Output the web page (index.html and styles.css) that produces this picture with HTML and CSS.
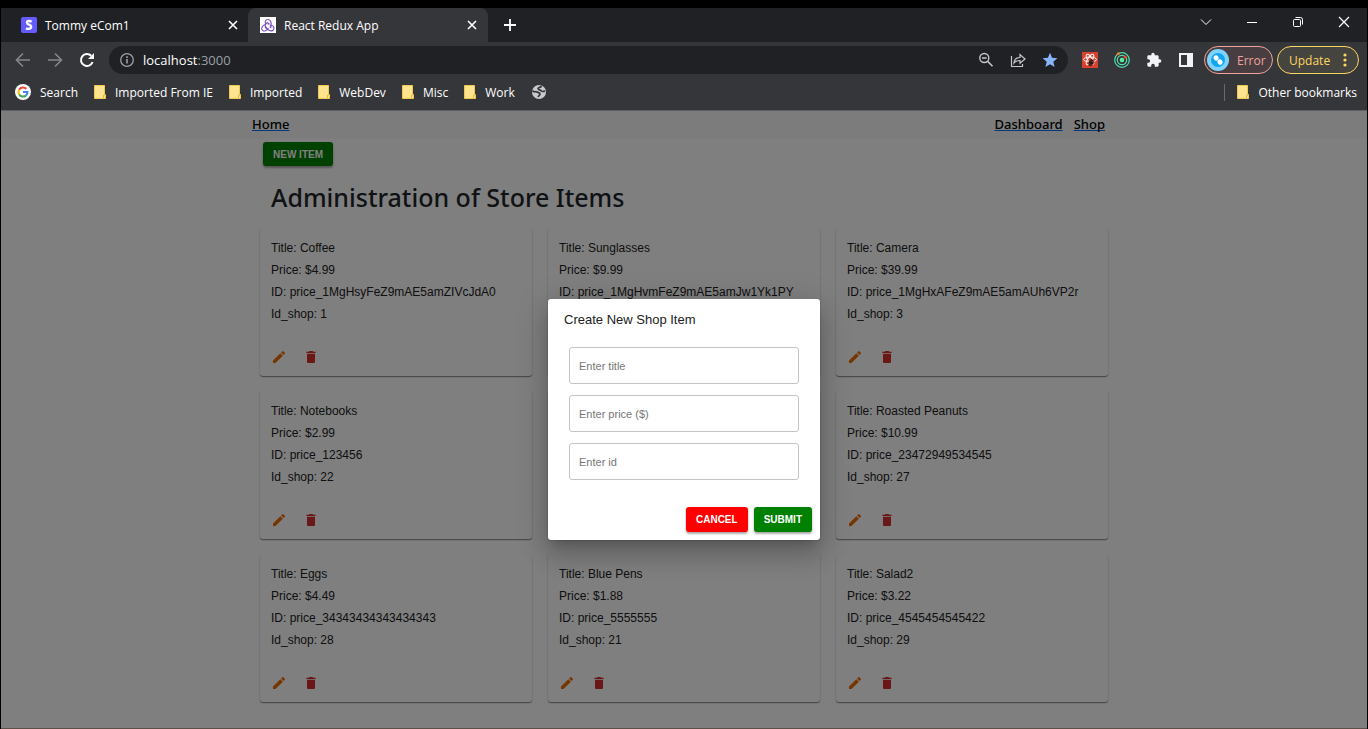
FILE: index.html
```html
<!DOCTYPE html>
<html lang="en">
<head>
<meta charset="utf-8">
<meta name="viewport" content="width=device-width, initial-scale=1">
<title>React Redux App</title>
<link rel="stylesheet" href="styles.css">
</head>
<body>
<svg class="sprite" aria-hidden="true">
  <symbol id="pencil" viewBox="0 0 24 24"><path fill="currentColor" d="M3 17.25V21h3.750L17.810 9.940l-3.750-3.750L3 17.250zM20.710 7.040c.39-.39.39-1.020 0-1.410l-2.340-2.340a1 1 0 0 0-1.410 0l-1.830 1.830 3.750 3.750 1.830-1.830z"/></symbol>
  <symbol id="bin" viewBox="0 0 24 24"><path fill="currentColor" d="M6 19c0 1.100.9 2 2 2h8c1.100 0 2-.9 2-2V7H6v12zM19 4h-3.500l-1-1h-5l-1 1H5v2h14V4z"/></symbol>
  <symbol id="close" viewBox="0 0 16 16"><path d="M4 4l8 8M12 4l-8 8" fill="none" stroke="currentColor" stroke-width="1.600"/></symbol>
  <symbol id="folder" viewBox="0 0 12 14"><path fill="#ffe48f" stroke="#f2c94f" d="M.5.500h10v9h1v4h-11z"/><path d="M9.500 13V10h2" fill="none" stroke="#e6b93c"/></symbol>
</svg>

<div class="window">
  <header class="chrome">
    <div class="tabstrip">
      <div class="tab">
        <svg class="favicon" viewBox="0 0 16 16"><rect width="16" height="16" rx="2" fill="#635bff"/><path d="M10.700 4.700C9.800 4.200 8.900 4 8 4 6.700 4 5.900 4.600 5.900 5.700c0 2.400 4.300 1.400 4.300 3.900 0 1.500-1 2.300-2.600 2.300-.9 0-1.800-.2-2.600-.7" fill="none" stroke="#fff" stroke-width="2.300"/></svg>
        <span class="tab-title">Tommy eCom1</span>
        <button class="icon-btn" aria-label="Close tab"><svg class="i16"><use href="#close"/></svg></button>
      </div>
      <div class="tab tab-active">
        <svg class="favicon" viewBox="0 0 16 16"><rect width="16" height="16" fill="#fff"/><g fill="none" stroke="#764abc" stroke-width="1.100"><path d="M10.700 9.600C12 6 10.800 2.500 8 2.500S4.500 5.400 5.900 7.500"/><path d="M5.700 7.200C2.500 8.300.8 11 2.200 13c1.600 2 5 .8 6.200-2"/><path d="M6 10.800c2.500 3.200 6.300 4 7.700 1.800 1.200-2.300-1-4.700-4-4.600"/><path d="M5.800 10.700C4 8.500 5.700 6 8 5.600"/></g><g fill="#764abc"><circle cx="10.600" cy="10" r="1"/><circle cx="5.900" cy="10.600" r="1"/><circle cx="8.600" cy="6.800" r="1"/></g></svg>
        <span class="tab-title">React Redux App</span>
        <button class="icon-btn" aria-label="Close tab"><svg class="i16"><use href="#close"/></svg></button>
      </div>
      <button class="icon-btn new-tab" aria-label="New tab"><svg class="i16" viewBox="0 0 16 16"><path d="M8 2v12M2 8h12" stroke="#fff" stroke-width="1.800"/></svg></button>
      <div class="window-controls">
        <button class="icon-btn" aria-label="Search tabs"><svg class="i16" viewBox="0 0 16 16"><path d="M3 5.500l5 5 5-5" fill="none" stroke="#fff"/></svg></button>
        <button class="icon-btn" aria-label="Minimize"><svg class="i16" viewBox="0 0 16 16"><path d="M3 8.500h10" stroke="#fff"/></svg></button>
        <button class="icon-btn" aria-label="Restore"><svg class="i16" viewBox="0 0 16 16"><rect x="3.500" y="5.500" width="7" height="7" rx="1" fill="none" stroke="#fff"/><path d="M5.500 3.500h5q2 0 2 2v5" fill="none" stroke="#fff"/></svg></button>
        <button class="icon-btn" aria-label="Close"><svg class="i16" viewBox="0 0 16 16"><path d="M3 3l10 10M13 3L3 13" stroke="#fff" stroke-width="1.200"/></svg></button>
      </div>
    </div>

    <div class="toolbar">
      <button class="icon-btn muted" aria-label="Back"><svg class="i16" viewBox="0 0 16 16"><path d="M15 8H2M8 1.500L1.500 8 8 14.500" fill="none" stroke="currentColor" stroke-width="1.600"/></svg></button>
      <button class="icon-btn muted" aria-label="Forward"><svg class="i16" viewBox="0 0 16 16"><path d="M1 8h13M8 1.500L14.500 8 8 14.500" fill="none" stroke="currentColor" stroke-width="1.600"/></svg></button>
      <button class="icon-btn" aria-label="Reload"><svg class="i16" viewBox="0 0 16 16"><path d="M13.600 10A6 6 0 1 1 12.300 3.800" fill="none" stroke="#fff" stroke-width="2"/><path d="M15 1v6H9z" fill="#fff"/></svg></button>
      <div class="omnibox">
        <svg class="i16" viewBox="0 0 16 16"><circle cx="8" cy="8" r="6.300" fill="none" stroke="#9aa0a6" stroke-width="1.300"/><path d="M8 7v4.500M8 4.300v1.600" stroke="#9aa0a6" stroke-width="1.600"/></svg>
        <span class="address">localhost<span class="port">:3000</span></span>
        <button class="icon-btn" aria-label="Zoom"><svg class="i16" viewBox="0 0 16 16"><circle cx="6.300" cy="6" r="4.500" fill="none" stroke="#c4c7cb" stroke-width="1.400"/><path d="M4 6h4.600M9.700 9.400l4.800 4.800" stroke="#c4c7cb" stroke-width="1.500"/></svg></button>
        <button class="icon-btn" aria-label="Share"><svg class="i16" viewBox="0 0 16 16"><path d="M1.500 4v10.500h11V12" fill="none" stroke="#c4c7cb" stroke-width="1.200"/><path d="M4 11c.5-4 3-5.500 6-5.500V2.500L15 7l-5 4.200V8.500c-3 0-4.500.5-6 2.500z" fill="none" stroke="#c4c7cb" stroke-width="1.200"/></svg></button>
        <button class="icon-btn" aria-label="Bookmark"><svg class="i16" viewBox="0 0 16 16"><path fill="#8ab4f8" d="M8 .8l2.100 5 5.300.4-4.100 3.500 1.300 5.200L8 12.200l-4.600 2.700 1.300-5.200L.6 6.200l5.300-.4z"/></svg></button>
      </div>
      <div class="extensions">
        <button class="icon-btn" aria-label="React extension"><svg class="i16" viewBox="0 0 16 16"><rect width="16" height="16" fill="#d9412f"/><g fill="none" stroke="#fff"><ellipse cx="8" cy="7.500" rx="6.500" ry="2.400"/><ellipse cx="8" cy="7.500" rx="2.200" ry="6" transform="rotate(-32 8 7.500)"/><ellipse cx="8" cy="7.500" rx="2.200" ry="6" transform="rotate(32 8 7.500)"/></g><ellipse cx="9.300" cy="10.500" rx="2.600" ry="3.400" transform="rotate(25 9 10)" fill="#241715"/><path d="M6.500 8.500l6 1.500M6 11.500l6 1.500" stroke="#c8443a" stroke-width=".6"/></svg></button>
        <button class="icon-btn" aria-label="Orbit extension"><svg class="i16" viewBox="0 0 16 16"><g fill="none" stroke="#4fe0ad" stroke-width="1.200"><circle cx="8" cy="8" r="7.300"/><circle cx="8" cy="8" r="4.700"/></g><circle cx="8" cy="8" r="2.300" fill="#55ef9b"/><circle cx="4.200" cy="1.700" r="1.500" fill="#f47b20"/><circle cx="11.200" cy="5" r="1.600" fill="#ee4a2e"/></svg></button>
        <button class="icon-btn" aria-label="Extensions"><svg class="i16" viewBox="0 0 24 24"><path fill="#f1f3f4" d="M20.500 11H19V7c0-1.100-.9-2-2-2h-4V3.500a2.500 2.500 0 0 0-5 0V5H4c-1.100 0-2 .9-2 2v3.800h1.500a2.700 2.700 0 0 1 0 5.400H2V20c0 1.100.9 2 2 2h3.800v-1.500a2.700 2.700 0 0 1 5.400 0V22H17c1.100 0 2-.9 2-2v-4h1.500a2.500 2.500 0 0 0 0-5z"/></svg></button>
        <button class="icon-btn" aria-label="Side panel"><svg class="i16" viewBox="0 0 16 16"><path fill="#f1f3f4" fill-rule="evenodd" d="M1 1h14v14H1zM3 3v10h6V3z"/></svg></button>
      </div>
      <button class="pill pill-error"><svg class="avatar" viewBox="0 0 22 22"><circle cx="11" cy="11" r="11" fill="#7dd3fc"/><circle cx="11" cy="11" r="7" fill="#12a5f4"/><path d="M9 8.800l.2.200M12.800 12.800l.4.400" stroke="#fff" stroke-width="5" stroke-linecap="round"/></svg>Error</button>
      <button class="pill pill-update">Update<svg class="dots" viewBox="0 0 4 14"><g fill="#fdd663"><circle cx="2" cy="2" r="1.600"/><circle cx="2" cy="7" r="1.600"/><circle cx="2" cy="12" r="1.600"/></g></svg></button>
    </div>

    <nav class="bookmarks" aria-label="Bookmarks">
      <a class="bookmark" href="#"><svg class="i16" viewBox="0 0 16 16"><circle cx="8" cy="8" r="8" fill="#fff"/><g fill="none" stroke-width="2"><path d="M4.200 5.600A4.500 4.500 0 0 1 11.300 4.900" stroke="#ea4335"/><path d="M4.200 5.600a4.500 4.500 0 0 0 0 4.800" stroke="#fbbc05"/><path d="M4.200 10.400a4.500 4.500 0 0 0 6.600 1.200" stroke="#34a853"/><path d="M8 8h4.500a4.500 4.500 0 0 1-1.700 3.600" stroke="#4285f4"/></g></svg>Search</a>
      <a class="bookmark" href="#"><svg class="folder"><use href="#folder"/></svg>Imported From IE</a>
      <a class="bookmark" href="#"><svg class="folder"><use href="#folder"/></svg>Imported</a>
      <a class="bookmark" href="#"><svg class="folder"><use href="#folder"/></svg>WebDev</a>
      <a class="bookmark" href="#"><svg class="folder"><use href="#folder"/></svg>Misc</a>
      <a class="bookmark" href="#"><svg class="folder"><use href="#folder"/></svg>Work</a>
      <a class="bookmark" href="#" aria-label="Website"><svg class="i16" viewBox="0 0 16 16"><circle cx="8" cy="8" r="7" fill="#c6c9ce"/><path d="M1.500 6.500C3 9 4.500 7 6 8s3 .5 3 2-1.500 1.500-2 3M10.500 2c-1 2-3.500 1-3.500 2.500S9.500 6 10.500 7s2 .5 3.500 0" fill="none" stroke="#35363a" stroke-width="1.700"/></svg></a>
      <a class="bookmark bookmark-other" href="#"><svg class="folder"><use href="#folder"/></svg>Other bookmarks</a>
    </nav>
  </header>

  <div class="page">
    <nav class="site-nav">
      <div class="site-nav-inner">
        <a class="site-link" href="#">Home</a>
        <a class="site-link site-link-end" href="#">Dashboard</a>
        <a class="site-link" href="#">Shop</a>
      </div>
    </nav>
    <main class="content">
      <button class="btn btn-green btn-new">NEW ITEM</button>
      <h1 class="heading">Administration of Store Items</h1>
      <div class="grid">
        <article class="card"><p>Title: Coffee</p><p>Price: $4.99</p><p>ID: price_1MgHsyFeZ9mAE5amZIVcJdA0</p><p>Id_shop: 1</p><div class="actions"><button class="edit" aria-label="Edit"><svg class="i16"><use href="#pencil"/></svg></button><button class="delete" aria-label="Delete"><svg class="i16"><use href="#bin"/></svg></button></div></article>
        <article class="card"><p>Title: Sunglasses</p><p>Price: $9.99</p><p>ID: price_1MgHvmFeZ9mAE5amJw1Yk1PY</p></article>
        <article class="card"><p>Title: Camera</p><p>Price: $39.99</p><p>ID: price_1MgHxAFeZ9mAE5amAUh6VP2r</p><p>Id_shop: 3</p><div class="actions"><button class="edit" aria-label="Edit"><svg class="i16"><use href="#pencil"/></svg></button><button class="delete" aria-label="Delete"><svg class="i16"><use href="#bin"/></svg></button></div></article>
        <article class="card"><p>Title: Notebooks</p><p>Price: $2.99</p><p>ID: price_123456</p><p>Id_shop: 22</p><div class="actions"><button class="edit" aria-label="Edit"><svg class="i16"><use href="#pencil"/></svg></button><button class="delete" aria-label="Delete"><svg class="i16"><use href="#bin"/></svg></button></div></article>
        <article class="card"></article>
        <article class="card"><p>Title: Roasted Peanuts</p><p>Price: $10.99</p><p>ID: price_23472949534545</p><p>Id_shop: 27</p><div class="actions"><button class="edit" aria-label="Edit"><svg class="i16"><use href="#pencil"/></svg></button><button class="delete" aria-label="Delete"><svg class="i16"><use href="#bin"/></svg></button></div></article>
        <article class="card"><p>Title: Eggs</p><p>Price: $4.49</p><p>ID: price_34343434343434343</p><p>Id_shop: 28</p><div class="actions"><button class="edit" aria-label="Edit"><svg class="i16"><use href="#pencil"/></svg></button><button class="delete" aria-label="Delete"><svg class="i16"><use href="#bin"/></svg></button></div></article>
        <article class="card"><p>Title: Blue Pens</p><p>Price: $1.88</p><p>ID: price_5555555</p><p>Id_shop: 21</p><div class="actions"><button class="edit" aria-label="Edit"><svg class="i16"><use href="#pencil"/></svg></button><button class="delete" aria-label="Delete"><svg class="i16"><use href="#bin"/></svg></button></div></article>
        <article class="card"><p>Title: Salad2</p><p>Price: $3.22</p><p>ID: price_4545454545422</p><p>Id_shop: 29</p><div class="actions"><button class="edit" aria-label="Edit"><svg class="i16"><use href="#pencil"/></svg></button><button class="delete" aria-label="Delete"><svg class="i16"><use href="#bin"/></svg></button></div></article>
      </div>
    </main>
    <div class="backdrop">
      <form class="dialog" role="dialog" aria-labelledby="dialog-title">
        <h2 class="dialog-title" id="dialog-title">Create New Shop Item</h2>
        <div class="fields">
          <input class="field" type="text" placeholder="Enter title" aria-label="Enter title">
          <input class="field" type="text" placeholder="Enter price ($)" aria-label="Enter price ($)">
          <input class="field" type="text" placeholder="Enter id" aria-label="Enter id">
        </div>
        <div class="dialog-actions">
          <button class="btn btn-red" type="button">CANCEL</button>
          <button class="btn btn-green" type="submit">SUBMIT</button>
        </div>
      </form>
    </div>
  </div>
</div>
</body>
</html>
```
FILE: styles.css
```css
* { box-sizing: border-box; }
body {
  margin: 0;
  background: #000;
  font-family: "Liberation Sans", Arial, sans-serif;
}
button { font: inherit; border: 0; padding: 0; background: none; color: inherit; cursor: pointer; }
p, h1, h2 { margin: 0; }
svg { display: block; flex: none; }
.sprite { position: absolute; width: 0; height: 0; }
.i16 { width: 16px; height: 16px; }

.window {
  min-height: 100vh;
  display: flex;
  flex-direction: column;
  padding: 8px 1px 0;
}

/* Browser frame */
.chrome {
  background: #35363a;
  color: #fff;
  font-family: "Open Sans", "Noto Sans", sans-serif;
  font-size: 12px;
  border-bottom: 1px solid #5f6064;
}
.icon-btn { display: flex; align-items: center; justify-content: center; flex: none; }
.tabstrip { display: flex; height: 34px; background: #202124; }
.tab {
  display: flex;
  align-items: center;
  width: 247px;
  padding: 0 7px 0 20px;
  gap: 8px;
}
.tab-active { width: 240px; padding: 0 8px 0 12px; background: #35363a; border-radius: 8px 8px 0 0; }
.favicon { width: 16px; height: 16px; }
.tab-title { flex: 1; }
.new-tab { margin-left: 14px; }
.window-controls { display: flex; gap: 30px; margin-left: auto; padding: 0 15px 6px 0; }

.toolbar { display: flex; align-items: center; height: 36px; padding: 0 8px 0 14px; gap: 16px; }
.muted { color: #85878b; }
.omnibox {
  display: flex;
  flex: 1;
  align-items: center;
  gap: 16px;
  height: 28px;
  margin-left: -2px;
  padding: 0 10px;
  border-radius: 14px;
  background: #202124;
}
.address { flex: 1; margin-left: -8px; font-size: 13px; }
.port { color: #9aa0a6; }
.extensions { display: flex; gap: 16px; margin: 0 -6px 0 -2px; }
.pill {
  display: flex;
  align-items: center;
  height: 28px;
  border-radius: 14px;
  border: 1px solid;
}
.pill-error { width: 69px; gap: 8px; padding-left: 2px; background: #483e41; border-color: #f0a29b; color: #f0a29b; }
.pill-update { width: 82px; justify-content: space-between; padding: 0 11px; margin-left: -12px; background: #46443e; border-color: #fdd663; color: #fdd663; }
.avatar { width: 22px; height: 22px; }
.dots { width: 4px; height: 14px; }

.bookmarks { display: flex; align-items: center; height: 32px; padding: 0 10px 4px 14px; gap: 16px; }
.bookmark { display: flex; align-items: center; gap: 9px; color: #fff; text-decoration: none; white-space: nowrap; }
.bookmark-other { margin-left: auto; padding-left: 12px; border-left: 1px solid #696a6e; }
.folder { width: 12px; height: 14px; }

/* Store page */
.page {
  position: relative;
  flex: 1;
  background: #fff;
  border-bottom: 1px solid #5a5048;
}
.site-nav { background: #f8f9fa; }
.site-nav-inner {
  display: flex;
  gap: 11px;
  max-width: 864px;
  margin: 0 auto;
  padding: 2px 11px 4px 0;
}
.site-link {
  color: #000;
  font-family: "Noto Sans", "Open Sans", sans-serif;
  font-size: 13px;
  font-weight: 500;
  line-height: 22px;
  text-decoration: underline 1px #0d6efd;
  text-decoration-skip-ink: none;
}
.site-link-end { margin-left: auto; }
.content { max-width: 864px; margin: 0 auto; padding: 3px 8px 20px; }
.heading {
  padding: 11px;
  color: #212529;
  font-family: "Noto Sans", "Open Sans", sans-serif;
  font-size: 25px;
  font-weight: 500;
  line-height: 40px;
}
.grid { display: grid; grid-template-columns: repeat(3, 1fr); gap: 15px 16px; }
.card {
  padding: 9px 11px 11px;
  border-radius: 3px;
  background: #fff;
  box-shadow: 0 1px 1px rgba(0, 0, 0, .34), 0 1px 2px rgba(0, 0, 0, .2);
  color: #212121;
  font-size: 12px;
  line-height: 22px;
}
.actions { display: flex; gap: 16px; padding-top: 24px; }
.edit { color: #ed6c02; }
.delete { color: #d32f2f; }

.btn {
  height: 25px;
  padding: 0 10px;
  border-radius: 3px;
  color: #fff;
  font-size: 10px;
  font-weight: 700;
  box-shadow: 0 2px 2px rgba(0, 0, 0, .26), 0 1px 3px rgba(0, 0, 0, .14);
}
.btn-green { background: #008000; }
.btn-red { background: #f00; }
.btn-new { display: block; height: 24px; margin-left: 3px; }

.backdrop {
  position: absolute;
  inset: 0;
  display: flex;
  align-items: center;
  justify-content: center;
  background: rgba(0, 0, 0, .5);
}
.dialog {
  width: 272px;
  padding-bottom: 8px;
  border-radius: 3px;
  background: #fff;
  box-shadow: 0 7px 10px -5px rgba(0, 0, 0, .2), 0 16px 25px 2px rgba(0, 0, 0, .14), 0 6px 31px 5px rgba(0, 0, 0, .12);
}
.dialog-title {
  padding: 10px 16px;
  color: #212121;
  font-size: 13px;
  font-weight: 400;
  line-height: 22px;
}
.fields { display: grid; gap: 11px; padding: 6px 21px 27px; }
.field {
  width: 100%;
  height: 37px;
  padding: 0 9px;
  border: 1px solid #c4c4c4;
  border-radius: 3px;
  font: 11px "Liberation Sans", Arial, sans-serif;
}
.field::placeholder { color: #767676; opacity: 1; }
.dialog-actions { display: flex; justify-content: flex-end; gap: 6px; padding-right: 8px; }
```
